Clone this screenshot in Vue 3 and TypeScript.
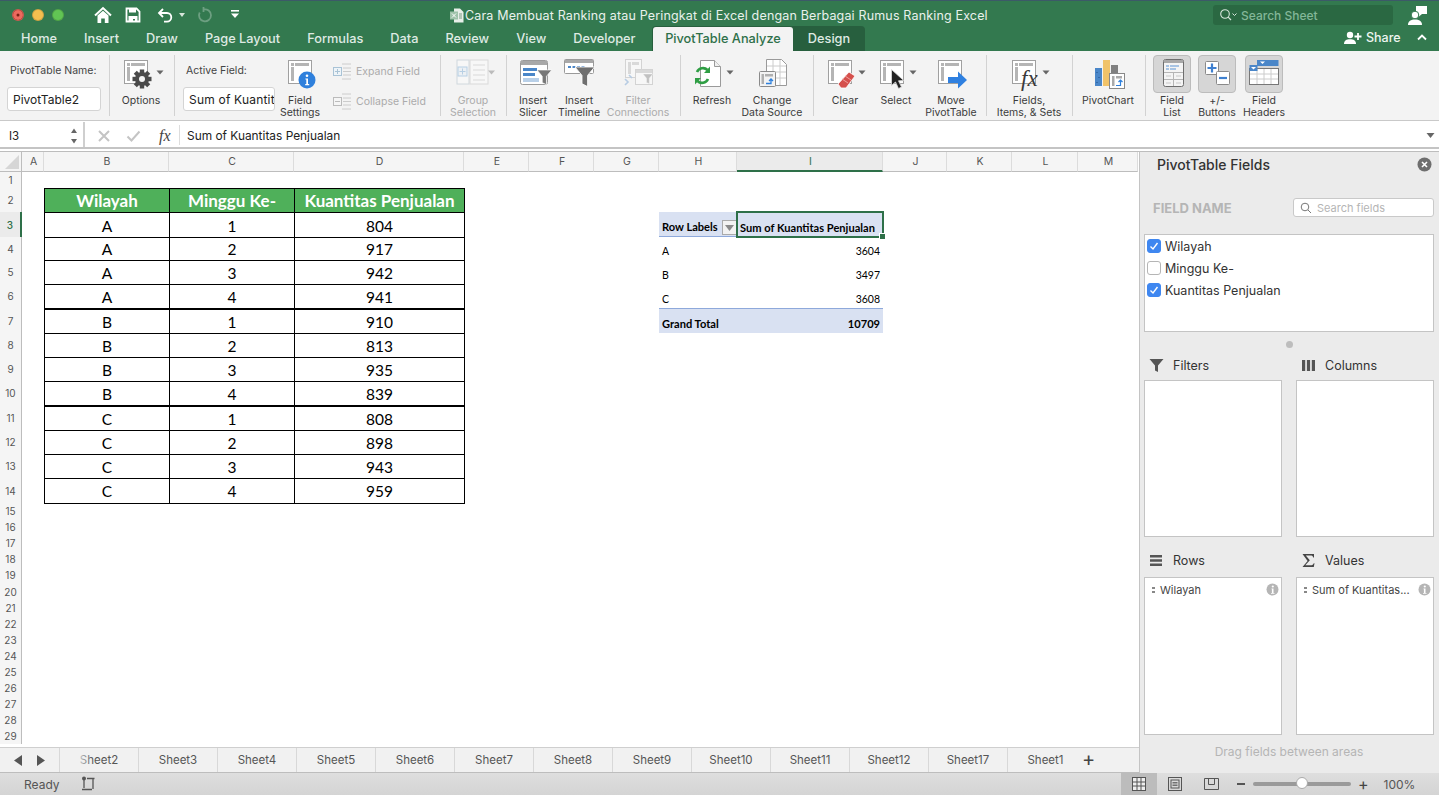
<script setup lang="ts">
type Btn = { lines: string[]; w: number; icon: string; off?: boolean; on?: boolean }
type Group = { w: number; pad?: number; kind?: string; items: Btn[] }

const caret = (x: number) => `<path d="M${x - 3.5} 13.5h7l-3.5 4z" fill="#666"/>`
const sheetBase = (x: number) =>
  `<rect x="${x + 0.5}" y="3.5" width="23" height="23" fill="#fff" stroke="#a0a0a0"/>` +
  `<rect x="${x + 3}" y="6" width="3" height="3" fill="#b5b5b5"/><rect x="${x + 7}" y="6" width="14" height="3" fill="#b5b5b5"/>` +
  `<rect x="${x + 3}" y="10" width="3" height="14" fill="#b5b5b5"/>`
const funnel = (x: number, y: number, s: number, c: string) =>
  `<path transform="translate(${x} ${y}) scale(${s})" d="M0 0h14L9 6v8l-4-2V6z" fill="${c}" stroke="#fff" stroke-width=".6"/>`

const gearTeeth = [0, 45, 90, 135]
  .map((a) => `<rect x="15.8" y="12.5" width="4.4" height="19" fill="#4a4a4a" transform="rotate(${a} 18 22)"/>`)
  .join('')

const icons: Record<string, string> = {
  options:
    sheetBase(0) +
    gearTeeth +
    `<circle cx="18" cy="22" r="7" fill="#4a4a4a"/><circle cx="18" cy="22" r="3" fill="#f3f3f3"/>` +
    caret(36),
  settings:
    sheetBase(5) +
    `<circle cx="24" cy="23" r="8.5" fill="#2f80dc"/><circle cx="24" cy="18.8" r="1.3" fill="#fff"/><path d="M22.4 21.4h2.6v5.6h1.2v1.2h-4v-1.2h1.1v-4.4h-.9z" fill="#fff"/>`,
  group:
    `<g opacity=".4"><rect x="1" y="3" width="12" height="24" fill="#fff" stroke="#9cb0bd"/><rect x="14" y="3" width="18" height="24" fill="#fff" stroke="#b5b5b5"/>` +
    `<path d="M17 8h12M17 13h12M17 18h12M17 23h12" stroke="#b5b5b5"/><rect x="2" y="10" width="9" height="9" fill="#e3eef7" stroke="#5f9ccf"/><path d="M6.5 11.5v6M3.5 14.5h6" stroke="#5f9ccf"/></g>` +
    `<path d="M32 13.5h7l-3.5 4z" fill="#bbb"/>`,
  slicer:
    `<rect x="4.5" y="3.5" width="27" height="24" rx="2" fill="#fff" stroke="#9a9a9a"/><rect x="5" y="4" width="26" height="4" fill="#a8a8a8"/>` +
    `<rect x="7" y="11" width="14" height="3" fill="#4a86c8"/><rect x="7" y="16" width="12" height="3" fill="#4a86c8"/><rect x="7" y="21" width="16" height="4" fill="#b9d0e8"/>` +
    funnel(21, 13, 1.05, '#777'),
  timeline:
    `<rect x="2.5" y="2.5" width="29" height="14" rx="1" fill="#fff" stroke="#9a9a9a"/><rect x="3" y="3" width="28" height="3" fill="#a8a8a8"/>` +
    `<path d="M6 10h3M10.5 10h3M15 10h3M19.5 10h3" stroke="#4a86c8" stroke-width="2"/>` +
    funnel(13, 10, 1.4, '#6f6f6f'),
  connections:
    `<g opacity=".35"><rect x="4.5" y="2.5" width="16" height="18" fill="#fff" stroke="#999"/><rect x="7" y="5" width="3" height="12" fill="#aaa"/><rect x="11" y="5" width="7" height="3" fill="#aaa"/>` +
    `<rect x="14.5" y="12.5" width="17" height="15" fill="#fff" stroke="#999"/><rect x="15" y="13" width="16" height="3" fill="#aaa"/>` +
    `<path d="M4 22l3 3-3 3M8 18l3 3" fill="none" stroke="#4a86c8" stroke-width="1.6"/>` +
    funnel(22, 17, .7, '#666') +
    `</g>`,
  refresh:
    `<path d="M5.5 3.5h14l6 6v20h-20z" fill="#fff" stroke="#9a9a9a"/><path d="M19.5 3.5v6h6" fill="#f0f0f0" stroke="#9a9a9a"/>` +
    `<path d="M2 15a6.5 6.5 0 0 1 10.5-2" fill="none" stroke="#2f9e44" stroke-width="2.6"/><path d="M15 9.5v6.5H9z" fill="#2f9e44"/>` +
    `<path d="M13 22a6.5 6.5 0 0 1-10.5 2" fill="none" stroke="#2f9e44" stroke-width="2.6"/><path d="M0 27.5V21h6z" fill="#2f9e44"/>` +
    `<path d="M31.5 13.5h7l-3.5 4z" fill="#666"/>`,
  source:
    `<path d="M11.5 2.5h15l5 5v21h-20z" fill="#fff" stroke="#9a9a9a"/><path d="M12 9h19M12 15h19M12 21h19M18 3v25M25 3v25" stroke="#ccc"/>` +
    `<rect x="4.5" y="14.5" width="16" height="15" rx="1" fill="#f3f3f3" stroke="#8a8a8a"/><rect x="6.5" y="17" width="2.5" height="10" fill="#b0b0b0"/><rect x="10" y="17" width="8" height="2.5" fill="#b0b0b0"/>` +
    `<path d="M11 26.5h5v-4M14 24l2-2 2 2" fill="none" stroke="#2f80dc" stroke-width="1.3"/>`,
  clear:
    sheetBase(0) +
    `<path d="M10 27l11-12 6 4-9 12h-5z" fill="#d5504c" stroke="#fff" stroke-width=".8"/><path d="M14 22l6 4M17 19l6 4" stroke="#f0a09d" stroke-width="1"/>` +
    caret(34),
  select:
    sheetBase(1) +
    `<path d="M12.5 12.5v16l4-3.5 3 6.5 3-1.4-3-6.3 5.2-.3z" fill="#222" stroke="#ddd" stroke-width=".8"/>` +
    caret(34),
  move:
    sheetBase(4) +
    `<path d="M14 20h10v-5.5l9 8.5-9 8.5V26H14z" fill="#2f80e0"/>`,
  fields:
    sheetBase(0) +
    `<text x="9" y="29" font-family="Liberation Serif, serif" font-style="italic" font-size="23" fill="#3a3a3a">fx</text>` +
    caret(34),
  chart:
    `<rect x="4" y="11" width="7" height="18" fill="#4a86c8"/><path d="M6 15v1M8 20v1M6 25v1" stroke="#1f4e8c"/>` +
    `<rect x="12" y="3" width="7" height="26" fill="#f0c36b"/><rect x="20" y="8" width="7" height="8" fill="#808080"/>` +
    `<rect x="18.5" y="16.5" width="15" height="15" fill="#fff" stroke="#888"/><rect x="21" y="19" width="2.5" height="10" fill="#aaa"/><rect x="25" y="19" width="6" height="2.5" fill="#aaa"/>` +
    `<path d="M25 28.5h4.5v-5M27.5 25l2-2 2 2" fill="none" stroke="#2f80dc" stroke-width="1.2"/>`,
  fieldlist:
    `<rect x="8.5" y="2.5" width="20" height="27" rx="2" fill="#f4f4f4" stroke="#6e6e6e"/><rect x="9" y="3" width="19" height="3" fill="#a8a8a8"/>` +
    `<path d="M11 9h3M15 9h9M11 12h3M15 12h6" stroke="#5b93d3"/><path d="M9 15.5h19M18.5 16v13M9 22.5h19" stroke="#b5b5b5"/><path d="M11 19h5M21 19h5M11 26h5M21 26h5" stroke="#c8c8c8"/>`,
  plusminus:
    `<rect x="5.5" y="4.5" width="13" height="13" rx="1" fill="#fff" stroke="#8a8a8a"/><path d="M12 6.5v9M7.5 11h9" stroke="#3f80cf" stroke-width="2.2"/>` +
    `<rect x="16.5" y="14.5" width="13" height="13" rx="1" fill="#fff" stroke="#8a8a8a"/><path d="M19 21h8" stroke="#3f80cf" stroke-width="2.2"/>`,
  headers:
    `<rect x="2.5" y="11.5" width="29" height="16" fill="#fff" stroke="#777"/><path d="M3 17h28M3 22h28M10 12v15M17 12v15M24 12v15" stroke="#ccc"/>` +
    `<rect x="2.5" y="8" width="8" height="6" fill="#4a86c8"/><rect x="10" y="3" width="21.5" height="6" fill="#4a86c8"/>` +
    `<path d="M4 10h5l-2.500 2.500z" fill="#fff"/><path d="M13 4.500h5L15.500 7z" fill="#fff"/>`,
}

const groups: Group[] = [
  { w: 110, kind: 'name', items: [] },
  { w: 65, items: [{ lines: ['Options'], w: 64, icon: 'options' }] },
  { w: 266, kind: 'active', items: [{ lines: ['Field', 'Settings'], w: 50, icon: 'settings' }] },
  { w: 66, items: [{ lines: ['Group', 'Selection'], w: 66, icon: 'group', off: true }] },
  {
    w: 174, pad: 4, items: [
      { lines: ['Insert', 'Slicer'], w: 46, icon: 'slicer' },
      { lines: ['Insert', 'Timeline'], w: 46, icon: 'timeline' },
      { lines: ['Filter', 'Connections'], w: 72, icon: 'connections', off: true },
    ],
  },
  {
    w: 133, items: [
      { lines: ['Refresh'], w: 64, icon: 'refresh' },
      { lines: ['Change', 'Data Source'], w: 56, icon: 'source' },
    ],
  },
  {
    w: 173, items: [
      { lines: ['Clear'], w: 64, icon: 'clear' },
      { lines: ['Select'], w: 38, icon: 'select' },
      { lines: ['Move', 'PivotTable'], w: 72, icon: 'move' },
    ],
  },
  { w: 86, items: [{ lines: ['Fields,', 'Items, & Sets'], w: 86, icon: 'fields' }] },
  { w: 73, items: [{ lines: ['PivotChart'], w: 72, icon: 'chart' }] },
  {
    w: 150, pad: 5, kind: 'last', items: [
      { lines: ['Field', 'List'], w: 44, icon: 'fieldlist', on: true },
      { lines: ['+/-', 'Buttons'], w: 46, icon: 'plusminus', on: true },
      { lines: ['Field', 'Headers'], w: 48, icon: 'headers', on: true },
    ],
  },
]

const tabs = ['Home', 'Insert', 'Draw', 'Page Layout', 'Formulas', 'Data', 'Review', 'View', 'Developer']

const columns = [
  { n: 'A', w: 22 }, { n: 'B', w: 125 }, { n: 'C', w: 125 }, { n: 'D', w: 170 }, { n: 'E', w: 65 }, { n: 'F', w: 65 },
  { n: 'G', w: 65 }, { n: 'H', w: 78 }, { n: 'I', w: 146 }, { n: 'J', w: 64 }, { n: 'K', w: 65 }, { n: 'L', w: 66 }, { n: 'M', w: 60 },
]
const rowHeights = [16, 24, 25, 23, 24, 24, 25, 24, 24, 24, 25, 24, 24, 25, ...Array(15).fill(16.1)] as number[]
const gridStyle = {
  gridTemplateColumns: '22px ' + columns.map((c) => c.w + 'px').join(' '),
  gridTemplateRows: '20px ' + rowHeights.map((h) => h + 'px').join(' '),
}

const sales: [string, number, number][] = [
  ['A', 1, 804], ['A', 2, 917], ['A', 3, 942], ['A', 4, 941],
  ['B', 1, 910], ['B', 2, 813], ['B', 3, 935], ['B', 4, 839],
  ['C', 1, 808], ['C', 2, 898], ['C', 3, 943], ['C', 4, 959],
]
const pivot = [['A', '3604'], ['B', '3497'], ['C', '3608']]

type Cell = { text: string; cls: string[] }
const cells: Record<string, Cell> = {}
;['Wilayah', 'Minggu Ke-', 'Kuantitas Penjualan'].forEach((t, i) => {
  const c = 'BCD'[i]
  cells[c + 2] = { text: t, cls: ['tb', 'th', ...(i === 2 ? ['tr'] : [])] }
})
sales.forEach((s, r) => {
  const row = r + 3
  s.forEach((v, i) => {
    const cls = ['tb']
    if (i === 2) cls.push('tr')
    if (row === 14) cls.push('tbot')
    if (row === 7 || row === 11) cls.push('thick')
    cells['BCD'[i] + row] = { text: String(v), cls }
  })
})
cells.H3 = { text: 'Row Labels', cls: ['pv', 'pv-head', 'pv-first'] }
cells.I3 = { text: 'Sum of Kuantitas Penjualan', cls: ['pv', 'pv-head', 'pv-sel'] }
pivot.forEach((p, i) => {
  cells['H' + (i + 4)] = { text: p[0], cls: ['pv', 'pv-first'] }
  cells['I' + (i + 4)] = { text: p[1], cls: ['pv', 'pv-num'] }
})
cells.H7 = { text: 'Grand Total', cls: ['pv', 'pv-total', 'pv-first'] }
cells.I7 = { text: '10709', cls: ['pv', 'pv-total', 'pv-num'] }

const cellAt = (col: string, row: number): Cell => cells[col + row] || { text: '', cls: [] }

const sheetTabs = ['Sheet2', 'Sheet3', 'Sheet4', 'Sheet5', 'Sheet6', 'Sheet7', 'Sheet8', 'Sheet9', 'Sheet10', 'Sheet11', 'Sheet12', 'Sheet17', 'Sheet1']
const fieldRows = [
  { name: 'Wilayah', on: true },
  { name: 'Minggu Ke-', on: false },
  { name: 'Kuantitas Penjualan', on: true },
]
</script>

<template>
  <div class="app">
    <header class="titlebar">
      <div class="lights">
        <span class="light red"></span><span class="light yellow"></span><span class="light green"></span>
      </div>
      <div class="quick">
        <svg width="18" height="18" viewBox="0 0 18 18"><path d="M1 9.500 9 2l8 7.500" fill="none" stroke="#fff" stroke-width="2"/><path d="M3.500 9.500 9 4.800l5.500 4.700V17h-3.700v-4.500H7.200V17H3.500z" fill="#fff"/></svg>
        <svg class="q-save" width="16" height="16" viewBox="0 0 16 16"><path d="M1.500 1.500h10l3 3v10h-13z" fill="none" stroke="#fff" stroke-width="1.800"/><rect x="4" y="1" width="7" height="4.500" fill="#fff"/><path d="M3.500 9h9v6h-2.500v-3H8v3H3.500z" fill="#fff"/></svg>
        <svg class="q-undo" width="16" height="16" viewBox="0 0 16 16"><path d="M6 2 2 6l4 4M2 6h8a4.300 4.300 0 0 1 0 8.600H7" fill="none" stroke="#fff" stroke-width="1.800"/></svg>
        <svg class="q-caret" width="8" height="6" viewBox="0 0 8 6"><path d="M1 1h6L4 5z" fill="#d8e6dc"/></svg>
        <svg class="q-redo" width="16" height="17" viewBox="0 0 16 17"><path d="M6.500 3.500a6 6 0 1 1-3.800 3M6.500 1v5" fill="none" stroke="#6d9f81" stroke-width="1.800"/></svg>
        <svg class="q-more" width="10" height="9" viewBox="0 0 10 9"><rect x="1" y="0" width="8" height="1.600" fill="#fff"/><path d="M1 3.500h8L5 8z" fill="#fff"/></svg>
      </div>
      <div class="doc-title">
        <svg width="14" height="15" viewBox="0 0 14 15"><path d="M4 .500h6l3.500 3.500v10.500H4z" fill="#e8efe9"/><rect x="0" y="3.500" width="8" height="8" fill="#9ec2a9"/><path d="M2 5.500l4 4M6 5.500l-4 4" stroke="#fff"/><path d="M9 6h3M9 8h3M9 10h3" stroke="#7a9b84"/></svg>
        <span>Cara Membuat Ranking atau Peringkat di Excel dengan Berbagai Rumus Ranking Excel</span>
      </div>
      <div class="search-sheet">
        <svg width="18" height="14" viewBox="0 0 18 14"><circle cx="6" cy="6" r="4.300" fill="none" stroke="#d7e6dc" stroke-width="1.100"/><path d="M9.200 9.200 12 12" stroke="#d7e6dc" stroke-width="1.200"/><path d="M13.500 5.500l2 2 2-2" fill="none" stroke="#d7e6dc"/></svg>
        <span>Search Sheet</span>
      </div>
      <svg class="person" width="20" height="20" viewBox="0 0 20 20"><path d="M8 1h11v8h-5l-3 2.500V9H8z" fill="#fff"/><circle cx="7" cy="10" r="3.800" fill="#fff" stroke="#33794f"/><path d="M0 20c0-4 3-5.500 7-5.500s7 1.500 7 5.500z" fill="#fff"/></svg>
    </header>

    <nav class="tabbar">
      <div class="tab-names">
        <span v-for="t in tabs" :key="t" class="tab">{{ t }}</span>
      </div>
      <div class="ctx-tabs">
        <span class="tab-active">PivotTable Analyze</span>
        <span class="tab-design">Design</span>
      </div>
      <div class="share">
        <svg width="18" height="13" viewBox="0 0 18 13"><circle cx="6" cy="4" r="3.200" fill="#fff"/><path d="M0 13c0-3.500 2.500-4.700 6-4.700s6 1.200 6 4.700z" fill="#fff"/><path d="M14 2v7M10.500 5.500h7" stroke="#fff" stroke-width="1.800"/></svg>
        <span>Share</span>
        <svg class="chev" width="10" height="7" viewBox="0 0 10 7"><path d="M1 5.500 5 1.500l4 4" fill="none" stroke="#fff" stroke-width="1.800"/></svg>
      </div>
    </nav>

    <section class="ribbon">
      <div
        v-for="(g, gi) in groups"
        :key="gi"
        class="rgroup"
        :class="{ nosep: g.kind === 'last' }"
        :style="{ width: g.w + 'px', paddingLeft: (g.pad || 0) + 'px' }"
      >
        <div v-if="g.kind === 'name'" class="form name-form">
          <label>PivotTable Name:</label>
          <div class="input">PivotTable2</div>
        </div>
        <div v-if="g.kind === 'active'" class="form active-form">
          <label>Active Field:</label>
          <div class="input">Sum of Kuantit</div>
        </div>
        <div
          v-for="b in g.items"
          :key="b.icon"
          class="rbtn"
          :class="{ off: b.off }"
          :style="{ width: b.w + 'px' }"
        >
          <div class="icon-wrap" :class="{ on: b.on }">
            <svg width="34" height="34" viewBox="0 0 34 34" v-html="icons[b.icon]"></svg>
          </div>
          <div class="rlabel" v-for="l in b.lines" :key="l">{{ l }}</div>
        </div>
        <div v-if="g.kind === 'active'" class="expand-col">
          <div class="expand-row">
            <svg width="19" height="17" viewBox="0 0 19 17"><rect x=".5" y="4.500" width="8" height="8" fill="#eef4f8" stroke="#a9c3d6"/><path d="M4.500 6v5M2 8.500h5" stroke="#a9c3d6"/><path d="M9 1h9M10 5h8M10 8.500h8M10 12h8M9 16h9" stroke="#ccc"/></svg>
            <span>Expand Field</span>
          </div>
          <div class="expand-row">
            <svg width="19" height="17" viewBox="0 0 19 17"><rect x=".5" y="4.500" width="8" height="8" fill="#f5f5f5" stroke="#bbb"/><path d="M2 8.500h5" stroke="#bbb"/><path d="M9 1h9M10 5h8M10 8.500h8M10 12h8M9 16h9" stroke="#ccc"/></svg>
            <span>Collapse Field</span>
          </div>
        </div>
      </div>
    </section>

    <section class="formula">
      <div class="namebox">
        <span>I3</span>
        <svg width="8" height="18" viewBox="0 0 8 18"><path d="M1 6 4 1.500 7 6zM1 12l3 4.500L7 12z" fill="#666"/></svg>
      </div>
      <div class="fbtns">
        <svg width="14" height="14" viewBox="0 0 14 14"><path d="M2 2l10 10M12 2 2 12" stroke="#c4c4c4" stroke-width="2"/></svg>
        <svg class="f-check" width="15" height="14" viewBox="0 0 15 14"><path d="M1.500 7.500l4 4 8-9" fill="none" stroke="#c4c4c4" stroke-width="2"/></svg>
        <span class="fx">fx</span>
      </div>
      <div class="ftext">Sum of Kuantitas Penjualan</div>
      <svg class="f-drop" width="9" height="7" viewBox="0 0 9 7"><path d="M.5 1h8L4.500 6z" fill="#666"/></svg>
    </section>

    <main class="workspace">
      <div class="sheet-area">
        <div class="grid" :style="gridStyle">
          <div class="corner"><svg width="14" height="14" viewBox="0 0 14 14"><path d="M14 0v14H0z" fill="#d6d6d6"/></svg></div>
          <div v-for="c in columns" :key="c.n" class="colh" :class="{ sel: c.n === 'I' }">{{ c.n }}</div>
          <template v-for="(h, ri) in rowHeights" :key="ri">
            <div class="rowh" :class="{ sel: ri === 2 }">{{ ri + 1 }}</div>
            <div
              v-for="c in columns"
              :key="c.n"
              class="cell"
              :class="cellAt(c.n, ri + 1).cls"
            >
              {{ cellAt(c.n, ri + 1).text }}
              <span v-if="c.n === 'H' && ri === 2" class="filter-btn"><svg width="9" height="6" viewBox="0 0 9 6"><path d="M0 0h9L4.500 6z" fill="#8a8a8a"/></svg></span>
              <span v-if="c.n === 'I' && ri === 2" class="handle"></span>
            </div>
          </template>
        </div>
        <div class="sheet-tabs">
          <div class="tab-nav">
            <svg width="9" height="11" viewBox="0 0 9 11"><path d="M8 0v11L0 5.500z" fill="#555"/></svg>
            <svg width="9" height="11" viewBox="0 0 9 11"><path d="M1 0v11l8-5.500z" fill="#555"/></svg>
          </div>
          <div class="tab-list">
            <span v-for="s in sheetTabs" :key="s" class="stab">{{ s }}</span>
          </div>
          <span class="add-sheet">+</span>
        </div>
      </div>

      <aside class="pane">
        <div class="pane-head">
          <span>PivotTable Fields</span>
          <svg width="15" height="15" viewBox="0 0 15 15"><circle cx="7.500" cy="7.500" r="7" fill="#6e6e6e"/><path d="M5 5l5 5M10 5l-5 5" stroke="#fff" stroke-width="1.600"/></svg>
        </div>
        <div class="pane-search">
          <span class="field-name">FIELD NAME</span>
          <div class="search-fields">
            <svg width="12" height="12" viewBox="0 0 12 12"><circle cx="5" cy="5" r="3.800" fill="none" stroke="#777"/><path d="M8 8l3 3" stroke="#777"/></svg>
            <span>Search fields</span>
          </div>
        </div>
        <div class="field-box">
          <div v-for="f in fieldRows" :key="f.name" class="field-row">
            <span class="check" :class="{ on: f.on }">
              <svg v-if="f.on" width="10" height="10" viewBox="0 0 10 10"><path d="M1.500 5.500l2.500 2.500 4.500-6" fill="none" stroke="#fff" stroke-width="1.400"/></svg>
            </span>
            {{ f.name }}
          </div>
        </div>
        <div class="sash"></div>
        <div class="areas">
          <div class="area">
            <div class="area-head">
              <svg width="15" height="15" viewBox="0 0 15 15"><path d="M.500 1h14L9 7.500V14l-3-1.500v-5z" fill="#555"/></svg>
              <span>Filters</span>
            </div>
            <div class="area-box"></div>
          </div>
          <div class="area">
            <div class="area-head">
              <svg width="15" height="15" viewBox="0 0 15 15"><path d="M1 2h3.200v11H1zM5.900 2h3.200v11H5.900zM10.800 2H14v11h-3.200z" fill="#555"/></svg>
              <span>Columns</span>
            </div>
            <div class="area-box"></div>
          </div>
          <div class="area">
            <div class="area-head">
              <svg width="15" height="15" viewBox="0 0 15 15"><path d="M1 2h12v2.400H1zM1 6.300h12v2.400H1zM1 10.600h12V13H1z" fill="#555"/></svg>
              <span>Rows</span>
            </div>
            <div class="area-box lower">
              <div class="chip">
                <i class="grip"></i><span>Wilayah</span>
                <svg width="13" height="13" viewBox="0 0 13 13"><circle cx="6.500" cy="6.500" r="6" fill="#b5b5b5"/><circle cx="6.800" cy="3.500" r="1.100" fill="#fff"/><path d="M5.500 5.500h2v4.500h1v.8H5v-.8h.9V6.300h-.4z" fill="#fff"/></svg>
              </div>
            </div>
          </div>
          <div class="area">
            <div class="area-head">
              <svg width="15" height="15" viewBox="0 0 15 15"><path d="M1.500 1h11.500v3.500h-.8c-.2-1-.7-2-1.800-2H4.800l4 4.700-4.500 5h6.200c1.200 0 1.900-.8 2.200-1.900h.8L12.800 14H1.500l5.100-6z" fill="#444"/></svg>
              <span>Values</span>
            </div>
            <div class="area-box lower">
              <div class="chip">
                <i class="grip"></i><span>Sum of Kuantitas...</span>
                <svg width="13" height="13" viewBox="0 0 13 13"><circle cx="6.500" cy="6.500" r="6" fill="#b5b5b5"/><circle cx="6.800" cy="3.500" r="1.100" fill="#fff"/><path d="M5.500 5.500h2v4.500h1v.8H5v-.8h.9V6.300h-.4z" fill="#fff"/></svg>
              </div>
            </div>
          </div>
        </div>
        <div class="drag-hint">Drag fields between areas</div>
      </aside>
    </main>

    <footer class="status">
      <span class="ready">Ready</span>
      <svg class="macro" width="16" height="16" viewBox="0 0 16 16"><circle cx="3" cy="2.500" r="2" fill="#555"/><path d="M3 4v8M6 2.500h7.500M12 2.500V13M1 13.500h10" fill="none" stroke="#555" stroke-width="1.300"/></svg>
      <div class="status-right">
        <span class="view-btn on">
          <svg width="14" height="14" viewBox="0 0 14 14"><rect x=".5" y=".5" width="13" height="13" fill="#eee" stroke="#555"/><path d="M5 1v12M9 1v12M1 5h12M1 9h12" stroke="#555"/></svg>
        </span>
        <span class="view-btn">
          <svg width="14" height="14" viewBox="0 0 14 14"><rect x=".5" y=".5" width="13" height="13" fill="none" stroke="#555"/><rect x="3" y="3" width="8" height="8" fill="none" stroke="#555"/><path d="M4.500 5.500h5M4.500 7h5M4.500 8.500h5" stroke="#555" stroke-width=".8"/></svg>
        </span>
        <span class="view-btn">
          <svg width="15" height="13" viewBox="0 0 15 13"><path d="M.5 .5h14v11H.5zM4.500 .5v6h6v-6" fill="none" stroke="#555"/></svg>
        </span>
        <span class="zoom-minus"></span>
        <div class="slider"><span class="thumb"></span></div>
        <span class="zoom-plus">+</span>
        <span class="zoom-val">100%</span>
      </div>
    </footer>
  </div>
</template>

<style>
html, body { margin: 0; background: #fff; overflow: hidden; }
</style>

<style scoped>
.app {
  width: 1439px;
  height: 795px;
  display: flex;
  flex-direction: column;
  overflow: hidden;
  font-family: "Inter", "Liberation Sans", sans-serif;
  color: #333;
}
svg { display: block; flex: none; overflow: visible; }

.titlebar {
  height: 28px;
  flex: none;
  position: relative;
  display: flex;
  align-items: center;
  background: #33794f;
  border-top: 1px solid #3c5a68;
  box-sizing: border-box;
  color: #fff;
}
.lights { display: flex; gap: 8px; padding-left: 12px; }
.light { width: 12px; height: 12px; border-radius: 50%; box-sizing: border-box; border: 1px solid rgba(0, 0, 0, .15); }
.red { background: #ec6a5e; box-shadow: inset 0 0 0 3.500px #ec6a5e, inset 0 0 0 6px #7e1f16; }
.yellow { background: #f4bf4f; }
.green { background: #61c554; }
.quick { display: flex; align-items: center; margin-left: 30px; }
.q-save { margin-left: 13px; }
.q-undo { margin-left: 16px; }
.q-caret { margin-left: 5px; }
.q-redo { margin-left: 11px; }
.q-more { margin-left: 17px; }
.doc-title {
  position: absolute;
  left: 450px;
  top: 7px;
  display: flex;
  align-items: center;
  gap: 1px;
  font-size: 12.500px;
  letter-spacing: .16px;
  white-space: nowrap;
  color: #e9f1ec;
}
.search-sheet {
  position: absolute;
  left: 1213px;
  top: 4px;
  width: 180px;
  height: 20px;
  box-sizing: border-box;
  padding-left: 6px;
  display: flex;
  align-items: center;
  gap: 4px;
  border-radius: 3px;
  background: #2a6842;
  color: #83b798;
  font-size: 12px;
  font-weight: 500;
}
.person { position: absolute; left: 1408px; top: 4px; }

.tabbar {
  height: 23px;
  flex: none;
  display: flex;
  align-items: center;
  position: relative;
  background: #33794f;
  color: #dfeae3;
  font-size: 12.750px;
  font-weight: 500;
}
.tab-names {
  width: 652px;
  flex: none;
  box-sizing: border-box;
  display: flex;
  gap: 27px;
  padding: 0 0 3px 21px;
  white-space: nowrap;
}
.ctx-tabs {
  display: flex;
  align-self: flex-end;
  height: 25px;
  padding: 1px 0 0 1px;
  box-sizing: border-box;
  border-radius: 4px 4px 0 0;
  background: #275f3e;
}
.tab-active {
  width: 140px;
  text-align: center;
  line-height: 23px;
  background: #f3f3f3;
  color: #2e7049;
  border-radius: 3px 3px 0 0;
}
.tab-design { width: 72px; text-align: center; line-height: 23px; color: #dfeae3; }
.share {
  position: absolute;
  left: 1344px;
  top: 2px;
  display: flex;
  align-items: center;
  gap: 4px;
  font-size: 12.500px;
  color: #eef5f0;
}
.chev { margin-left: 12px; }

.ribbon {
  height: 70px;
  flex: none;
  display: flex;
  background: #f3f3f3;
  box-sizing: border-box;
  border-bottom: 1px solid #c9c9c9;
}
.rgroup {
  position: relative;
  display: flex;
  flex: none;
  box-sizing: border-box;
}
.rgroup::after {
  content: "";
  position: absolute;
  right: 0;
  top: 4px;
  bottom: 4px;
  width: 1px;
  background: #d2d2d2;
}
.rgroup.nosep::after { display: none; }
.form { display: flex; flex-direction: column; box-sizing: border-box; font-size: 10.500px; flex: none; }
.form label { line-height: 13px; margin-top: 13px; padding-left: 3px; color: #444; white-space: nowrap; }
.input {
  height: 24px;
  margin-top: 10px;
  box-sizing: border-box;
  border: 1px solid #d4d4d4;
  border-radius: 3px;
  background: #fff;
  color: #222;
  font-size: 12px;
  line-height: 23px;
  padding-left: 5px;
  overflow: hidden;
  white-space: nowrap;
}
.name-form { width: 101px; padding-left: 7px; }
.active-form { width: 101px; padding-left: 9px; margin-left: -1px; margin-right: 1px; }
.active-form .input { letter-spacing: .2px; }
.rbtn { display: flex; flex-direction: column; align-items: center; flex: none; transform: translateX(-1px); }
.icon-wrap {
  width: 38px;
  height: 38px;
  margin: 4px 0 2px;
  box-sizing: border-box;
  display: flex;
  align-items: center;
  justify-content: center;
  padding-bottom: 1px;
  border: 1px solid transparent;
  border-radius: 4px;
}
.icon-wrap.on { background: #d6d6d6; border-color: #bcbcbc; }
.rlabel { font-size: 10.500px; line-height: 12px; color: #3c3c3c; white-space: nowrap; }
.rbtn.off .rlabel { color: #ababab; }
.expand-col {
  display: flex;
  flex-direction: column;
  gap: 13px;
  padding: 12px 0 0 7px;
  font-size: 10.500px;
  color: #ababab;
}
.expand-row { display: flex; align-items: center; gap: 4px; white-space: nowrap; }

.formula {
  height: 28px;
  flex: none;
  display: flex;
  align-items: center;
  padding-top: 1px;
  background: #fff;
  border-bottom: 2px solid #c4c4c4;
  box-sizing: border-box;
  position: relative;
}
.namebox {
  width: 85px;
  height: 100%;
  flex: none;
  box-sizing: border-box;
  display: flex;
  align-items: center;
  justify-content: space-between;
  padding: 2px 5px 0 9px;
  border-right: 2px solid #cfcfcf;
  font-size: 11.500px;
  color: #222;
}
.fbtns { display: flex; align-items: center; width: 94px; flex: none; padding: 2px 0 0 12px; height: 100%; box-sizing: border-box; }
.f-check { margin-left: 15px; }
.fx { margin-left: 18px; font-family: "Liberation Serif", serif; font-style: italic; font-size: 16px; color: #444; }
.ftext { flex: 1; padding: 2px 0 0 7px; border-left: 1px solid #ddd; font-size: 11.900px; line-height: 18px; color: #222; }
.f-drop { position: absolute; right: 4px; top: 11px; }

.workspace { flex: 1; min-height: 0; display: flex; margin-top: 2px; }
.sheet-area { width: 1139px; flex: none; display: flex; flex-direction: column; }
.grid {
  height: 596px;
  flex: none;
  display: grid;
  overflow: hidden;
  border-top: 1px solid #bdbdbd;
  box-sizing: border-box;
  background: #fff;
}
.corner, .colh {
  background: #f5f5f5;
  border-bottom: 1px solid #bdbdbd;
  border-right: 1px solid #dcdcdc;
  box-sizing: border-box;
}
.corner { display: flex; align-items: flex-end; justify-content: flex-end; padding: 0 2px 2px 0; border-right-color: #bdbdbd; }
.colh {
  display: flex;
  align-items: center;
  justify-content: center;
  padding-left: 2px;
  font-size: 10.500px;
  color: #555;
}
.colh.sel { background: #ebebeb; color: #2e7049; border-bottom: 2px solid #2e7049; }
.rowh {
  background: #f5f5f5;
  border-right: 1px solid #bdbdbd;
  box-sizing: border-box;
  display: flex;
  align-items: center;
  justify-content: center;
  font-size: 10px;
  color: #555;
}
.rowh.sel { background: #ebebeb; color: #2e7049; border-right: 2px solid #2e7049; font-weight: 500; }
.cell {
  position: relative;
  min-width: 0;
  box-sizing: border-box;
  font-family: "Lato", "Liberation Sans", sans-serif;
  white-space: nowrap;
}
.tb {
  display: flex;
  align-items: flex-end;
  justify-content: center;
  border-top: 1px solid #000;
  border-left: 1px solid #000;
  font-size: 15.500px;
  line-height: 22px;
  color: #000;
}
.th { background: #4fb05a; color: #fff; font-weight: 700; font-size: 17px; }
.tr { border-right: 1px solid #000; margin-right: -1px; }
.tbot { border-bottom: 1px solid #000; margin-bottom: -1px; padding-bottom: 1px; }
.thick { border-top-width: 2px; }
.pv {
  display: flex;
  align-items: flex-end;
  font-size: 10.500px;
  line-height: 18px;
  padding-left: 3px;
  color: #000;
}
.pv-head { background: #d9e1f2; font-weight: 700; font-size: 11.100px; border-bottom: 1px solid #8ea9db; }
.pv-sel { outline: 2px solid #2e7049; outline-offset: -1px; border-bottom: 0; z-index: 1; }
.pv-num { justify-content: flex-end; padding-right: 3px; }
.pv-total { background: #d9e1f2; font-weight: 700; font-size: 11.100px; border-top: 1px solid #8ea9db; }
.filter-btn {
  position: absolute;
  right: 0;
  bottom: 1px;
  width: 15px;
  height: 15px;
  box-sizing: border-box;
  border: 1px solid #aaa;
  background: #f2f2f2;
  display: flex;
  align-items: center;
  justify-content: center;
}
.handle {
  position: absolute;
  right: -3px;
  bottom: -3px;
  width: 5px;
  height: 5px;
  background: #2e7049;
  border: 1px solid #fff;
  box-sizing: content-box;
  z-index: 2;
}

.sheet-tabs {
  flex: 1;
  display: flex;
  align-items: stretch;
  background: #f1f1f1;
  border-top: 1px solid #cfcfcf;
  border-bottom: 1px solid #bdbdbd;
  box-sizing: border-box;
}
.tab-nav {
  width: 60px;
  flex: none;
  box-sizing: border-box;
  display: flex;
  align-items: center;
  gap: 13px;
  padding-left: 14px;
  border-right: 1px solid #d8d8d8;
}
.tab-list { position: relative; display: flex; width: 1005px; flex: none; overflow: hidden; }
.tab-list::before {
  content: "";
  position: absolute;
  left: 19px;
  top: 0;
  bottom: 0;
  width: 14px;
  background: linear-gradient(to right, rgba(241, 241, 241, .75), rgba(241, 241, 241, 0));
}
.stab {
  width: 79px;
  flex: none;
  text-align: center;
  font-size: 11.500px;
  line-height: 24px;
  color: #555;
  box-sizing: border-box;
  border-right: 1px solid #d8d8d8;
}
.stab:last-child { border-right: 0; padding-right: 4px; }
.add-sheet { margin-left: 17px; font-size: 20px; line-height: 22px; color: #444; }

.pane {
  width: 300px;
  flex: none;
  box-sizing: border-box;
  background: #ebebeb;
  border-top: 1px solid #bdbdbd;
  border-left: 1px solid #c4c4c4;
  padding: 0 5px 0 4px;
  display: flex;
  flex-direction: column;
  color: #333;
}
.pane-head {
  height: 25px;
  padding: 0 2px 0 13px;
  display: flex;
  align-items: center;
  justify-content: space-between;
  font-size: 14px;
  font-weight: 500;
}
.pane-search {
  display: flex;
  align-items: center;
  justify-content: space-between;
  margin-top: 21px;
  padding-left: 9px;
}
.field-name { font-size: 13px; font-weight: 700; color: #b5b5b5; }
.search-fields {
  width: 141px;
  height: 19px;
  box-sizing: border-box;
  display: flex;
  align-items: center;
  gap: 5px;
  padding-left: 6px;
  background: #fff;
  border: 1px solid #c9c9c9;
  border-radius: 3px;
  font-size: 11px;
  color: #b5b5b5;
}
.field-box {
  height: 98px;
  margin-top: 17px;
  box-sizing: border-box;
  background: #fff;
  border: 1px solid #c4c4c4;
}
.field-row { height: 22px; display: flex; align-items: center; gap: 4px; padding-left: 2px; font-size: 12.500px; color: #333; }
.check {
  width: 14px;
  height: 14px;
  box-sizing: border-box;
  border: 1px solid #b5b5b5;
  border-radius: 3px;
  background: #fff;
  display: flex;
  align-items: center;
  justify-content: center;
}
.check.on { background: #3f87f0; border-color: #3f87f0; }
.sash { width: 7px; height: 7px; margin: 9px auto 0; border-radius: 50%; background: #bdbdbd; }
.areas {
  margin-top: 3px;
  display: grid;
  grid-template-columns: 138px 138px;
  column-gap: 14px;
  row-gap: 0;
}
.area-head { height: 29px; display: flex; align-items: center; gap: 9px; padding-left: 5px; font-size: 12.500px; color: #333; }
.area-box { height: 157px; box-sizing: border-box; background: #fff; border: 1px solid #c4c4c4; }
.area:nth-child(n + 3) .area-head { margin-top: 8px; height: 32px; padding-bottom: 2px; box-sizing: border-box; }
.area-box.lower { height: 158px; }
.chip {
  display: flex;
  align-items: center;
  height: 13px;
  margin-top: 5px;
  padding: 0 2px 0 7px;
  font-size: 11px;
  color: #444;
}
.chip span { flex: 1; margin-left: 5px; white-space: nowrap; }
.grip {
  width: 3px;
  height: 8px;
  background: radial-gradient(circle, #888 1.300px, transparent 1.500px) 0 0 / 3px 4px;
}
.drag-hint { margin-top: 9px; text-align: center; font-size: 12px; color: #b5b5b5; }

.status {
  height: 22px;
  flex: none;
  display: flex;
  align-items: center;
  position: relative;
  background: linear-gradient(#dedede, #d4d4d4);
  font-size: 12px;
  color: #555;
}
.ready { margin-left: 24px; }
.macro { margin-left: 21px; }
.status-right { position: absolute; left: 1121px; top: 0; bottom: 0; display: flex; align-items: center; }
.view-btn { width: 36px; height: 100%; display: flex; align-items: center; justify-content: center; }
.view-btn.on { background: #bcbcbc; }
.zoom-minus { width: 8px; height: 2px; background: #555; margin-left: 8px; }
.slider { position: relative; width: 98px; height: 4px; margin-left: 8px; border-radius: 2px; background: #9a9a9a; }
.thumb {
  position: absolute;
  left: 43px;
  top: -5px;
  width: 12px;
  height: 12px;
  box-sizing: border-box;
  border-radius: 50%;
  background: #fff;
  border: 1px solid #aaa;
}
.zoom-plus { margin-left: 7px; font-size: 16px; line-height: 16px; color: #444; }
.zoom-val { margin-left: 15px; font-size: 12px; }
</style>
